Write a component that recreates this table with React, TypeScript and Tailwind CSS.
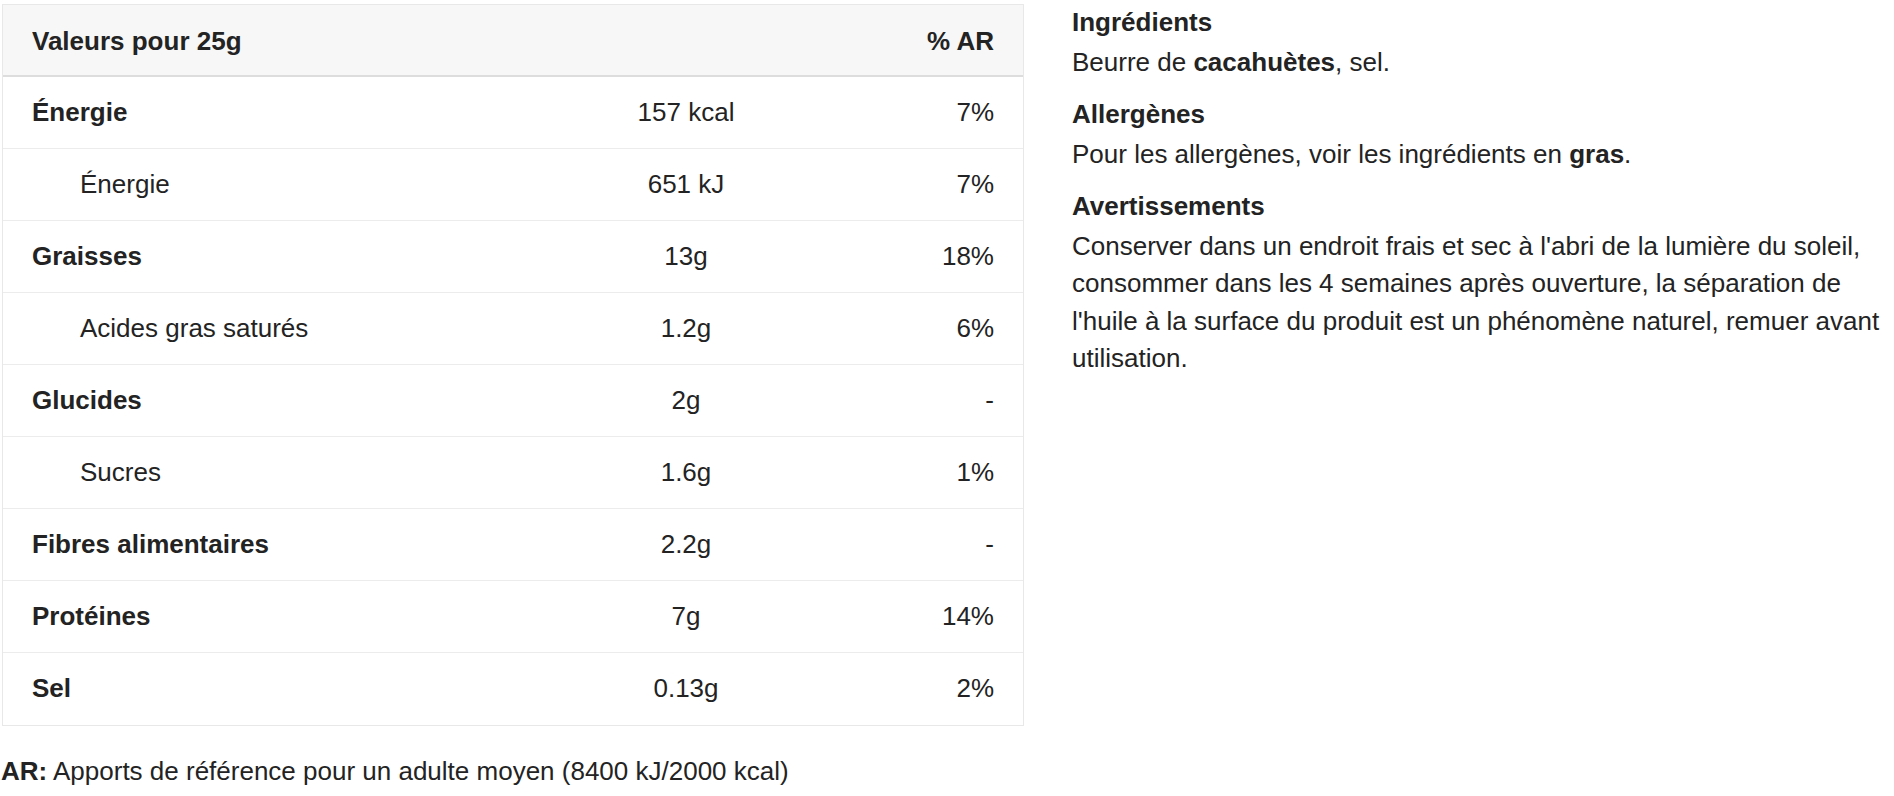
import React from 'react';

type Row = { label: string; value: string; ar: string; sub?: boolean };

const rows: Row[] = [
  { label: 'Énergie', value: '157 kcal', ar: '7%' },
  { label: 'Énergie', value: '651 kJ', ar: '7%', sub: true },
  { label: 'Graisses', value: '13g', ar: '18%' },
  { label: 'Acides gras saturés', value: '1.2g', ar: '6%', sub: true },
  { label: 'Glucides', value: '2g', ar: '-' },
  { label: 'Sucres', value: '1.6g', ar: '1%', sub: true },
  { label: 'Fibres alimentaires', value: '2.2g', ar: '-' },
  { label: 'Protéines', value: '7g', ar: '14%' },
  { label: 'Sel', value: '0.13g', ar: '2%' },
];

const cols = 'grid grid-cols-[560px_246px_1fr] items-center';

function App() {
  return (
    <div
      className="min-h-screen bg-white text-[#232323] text-[26px] leading-[37.5px]"
      style={{ fontFamily: '"Liberation Sans", Arial, Helvetica, sans-serif' }}
    >
      <div className="flex items-start">
        <div className="ml-[2px] mt-[4px] w-[1022px] shrink-0">
          <div className="border border-[#e8e8e8]">
            <div className={`${cols} h-[72px] bg-[#f7f7f7] border-b-2 border-[#dddddd] font-bold pt-[4px]`}>
              <div className="pl-[29px]">Valeurs pour 25g</div>
              <div />
              <div className="pr-[29px] text-right">% AR</div>
            </div>
            {rows.map((r, i) => (
              <div
                key={i}
                className={`${cols} h-[72px] ${i < rows.length - 1 ? 'border-b border-[#ececec]' : ''}`}
              >
                <div className={r.sub ? 'pl-[77px]' : 'pl-[29px] font-bold'}>{r.label}</div>
                <div className="text-center">{r.value}</div>
                <div className="pr-[29px] text-right">{r.ar}</div>
              </div>
            ))}
          </div>
          <p className="mt-[27px] -ml-[1px] whitespace-nowrap">
            <b>AR:</b> Apports de référence pour un adulte moyen (8400 kJ/2000 kcal)
          </p>
        </div>

        <div className="ml-[48px] mt-[4px] flex-1">
          <h3 className="font-bold mb-[2px]">Ingrédients</h3>
          <p>
            Beurre de <b>cacahuètes</b>, sel.
          </p>
          <h3 className="font-bold mt-[15px] mb-[2px]">Allergènes</h3>
          <p>
            Pour les allergènes, voir les ingrédients en <b>gras</b>.
          </p>
          <h3 className="font-bold mt-[15px] mb-[2px]">Avertissements</h3>
          <p className="whitespace-nowrap">
            <span className="block">Conserver dans un endroit frais et sec à l'abri de la lumière du soleil,</span>
            <span className="block">consommer dans les 4 semaines après ouverture, la séparation de</span>
            <span className="block">l'huile à la surface du produit est un phénomène naturel, remuer avant</span>
            <span className="block">utilisation.</span>
          </p>
        </div>
      </div>
    </div>
  );
}

export default App;
